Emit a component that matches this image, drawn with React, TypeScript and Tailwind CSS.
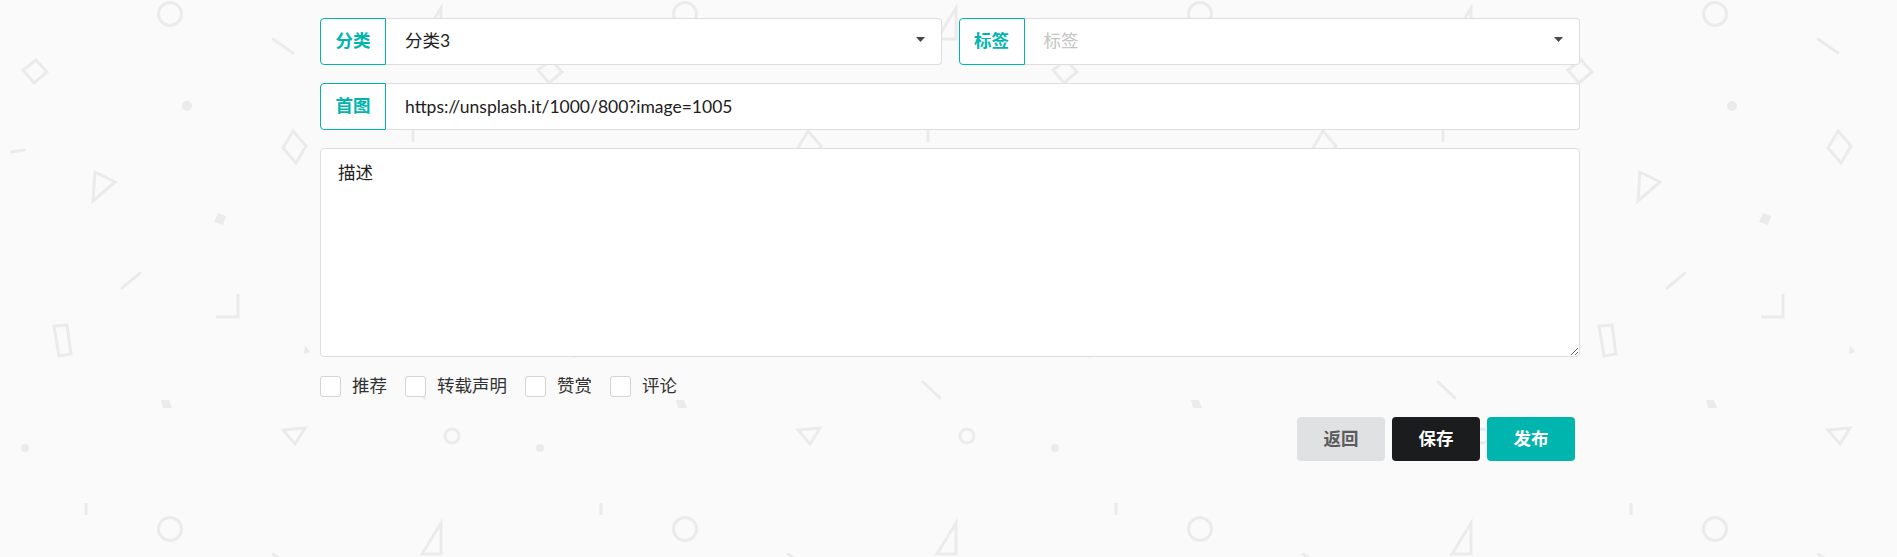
import React from "react";

const font = "font-['Lato','Noto_Sans_CJK_SC',sans-serif]";

function Confetti() {
  // repeating tile of faint shapes behind the form
  return (
    <svg className="absolute inset-0 h-full w-full" aria-hidden="true">
      <defs>
        <pattern id="confetti" width="515" height="515" patternUnits="userSpaceOnUse">
          <g fill="none" stroke="#ebebeb" strokeWidth="3" strokeLinecap="round" strokeLinejoin="miter">
            <circle cx="170" cy="14" r="11.5" />
            <line x1="273" y1="39" x2="293" y2="53" />
            <polygon points="36,60 47,72 34,83 23,70" />
            <polygon points="293,131 306,146 296,163 283,148" />
            <line x1="11" y1="152" x2="24" y2="150" />
            <polygon points="95,172 115,182 93,201" />
            <line x1="122" y1="288" x2="140" y2="273" />
            <polyline points="216,317 238,317 238,294" strokeLinecap="butt" />
            <polygon points="54,326 67,325 71,354 59,356" />
            <polygon points="283,430 305,428 295,444" />
            <line x1="86" y1="503" x2="86" y2="516" strokeLinecap="butt" />
            <circle cx="452" cy="436" r="7" />
            <polygon points="441,8 441,39 422,39" />
            <line x1="408" y1="382" x2="425" y2="398" />
            <line x1="413" y1="129" x2="413" y2="141" />
          </g>
          <g fill="#ebebeb">
            <circle cx="187" cy="106" r="5" />
            <polygon points="218,213 226,216 223,225 214,222" />
            <polygon points="305,345 310,352 304,354" />
            <polygon points="161,400 169,400 172,408 163,408" />
            <circle cx="25" cy="448" r="4" />
          </g>
        </pattern>
      </defs>
      <rect width="100%" height="100%" fill="url(#confetti)" />
    </svg>
  );
}

function Caret() {
  return (
    <svg width="9" height="5" viewBox="0 0 9 5" className="mr-[16px] mb-[5px] shrink-0">
      <polygon points="0,0 9,0 4.5,5" fill="#333" fillOpacity="0.9" />
    </svg>
  );
}

function LabeledField({
  label,
  children,
}: {
  label: string;
  children: React.ReactNode;
}) {
  return (
    <div className="flex h-[47px]">
      <div className="flex w-[66px] shrink-0 items-center justify-center rounded-l-[4px] border border-[#00b5ad] bg-white font-bold text-[#00b5ad]">
        {label}
      </div>
      <div className="flex flex-1 items-center rounded-r-[4px] border border-l-0 border-[#dedede] bg-white">
        {children}
      </div>
    </div>
  );
}

function Check({ label }: { label: string }) {
  return (
    <label className="flex items-center">
      <span className="h-[21px] w-[21px] rounded-[3px] border border-[#d4d4d5] bg-white" />
      <span className="ml-[11px] text-[#333]">{label}</span>
    </label>
  );
}

export default function App() {
  return (
    <div className={`relative h-[557px] w-full overflow-hidden bg-[#fafafa] ${font} text-[17.5px]`}>
      <Confetti />

      <div className="relative ml-[320px] w-[1260px] pt-[18px]">
        {/* category + tags */}
        <div className="grid grid-cols-2 gap-x-[17px]">
          <LabeledField label="分类">
            <span className="flex-1 pl-[19px] text-[#212121]">分类3</span>
            <Caret />
          </LabeledField>
          <LabeledField label="标签">
            <span className="flex-1 pl-[19px] text-[#c4c4c4]">标签</span>
            <Caret />
          </LabeledField>
        </div>

        {/* cover image */}
        <div className="mt-[18px]">
          <LabeledField label="首图">
            <input
              className="h-full w-full rounded-r-[4px] bg-white pl-[19px] text-[#212121] outline-none"
              defaultValue="https://unsplash.it/1000/800?image=1005"
            />
          </LabeledField>
        </div>

        {/* description */}
        <textarea
          className="mt-[18px] block h-[209px] w-full rounded-[4px] border border-[#dedede] bg-white px-[17px] py-[13px] leading-[1.3] text-[#212121] outline-none"
          defaultValue="描述"
        />

        {/* options */}
        <div className="mt-[19px] flex h-[21px] items-center gap-x-[18px]">
          <Check label="推荐" />
          <Check label="转载声明" />
          <Check label="赞赏" />
          <Check label="评论" />
        </div>

        {/* actions */}
        <div className="mt-[20px] flex justify-end gap-x-[7px] pr-[5px]">
          <button className="h-[44px] w-[88px] rounded-[4px] bg-[#e0e1e2] font-bold text-[#5c5c5c]">
            返回
          </button>
          <button className="h-[44px] w-[88px] rounded-[4px] bg-[#1b1c1d] font-bold text-white">
            保存
          </button>
          <button className="h-[44px] w-[88px] rounded-[4px] bg-[#00b5ad] font-bold text-white">
            发布
          </button>
        </div>
      </div>
    </div>
  );
}
